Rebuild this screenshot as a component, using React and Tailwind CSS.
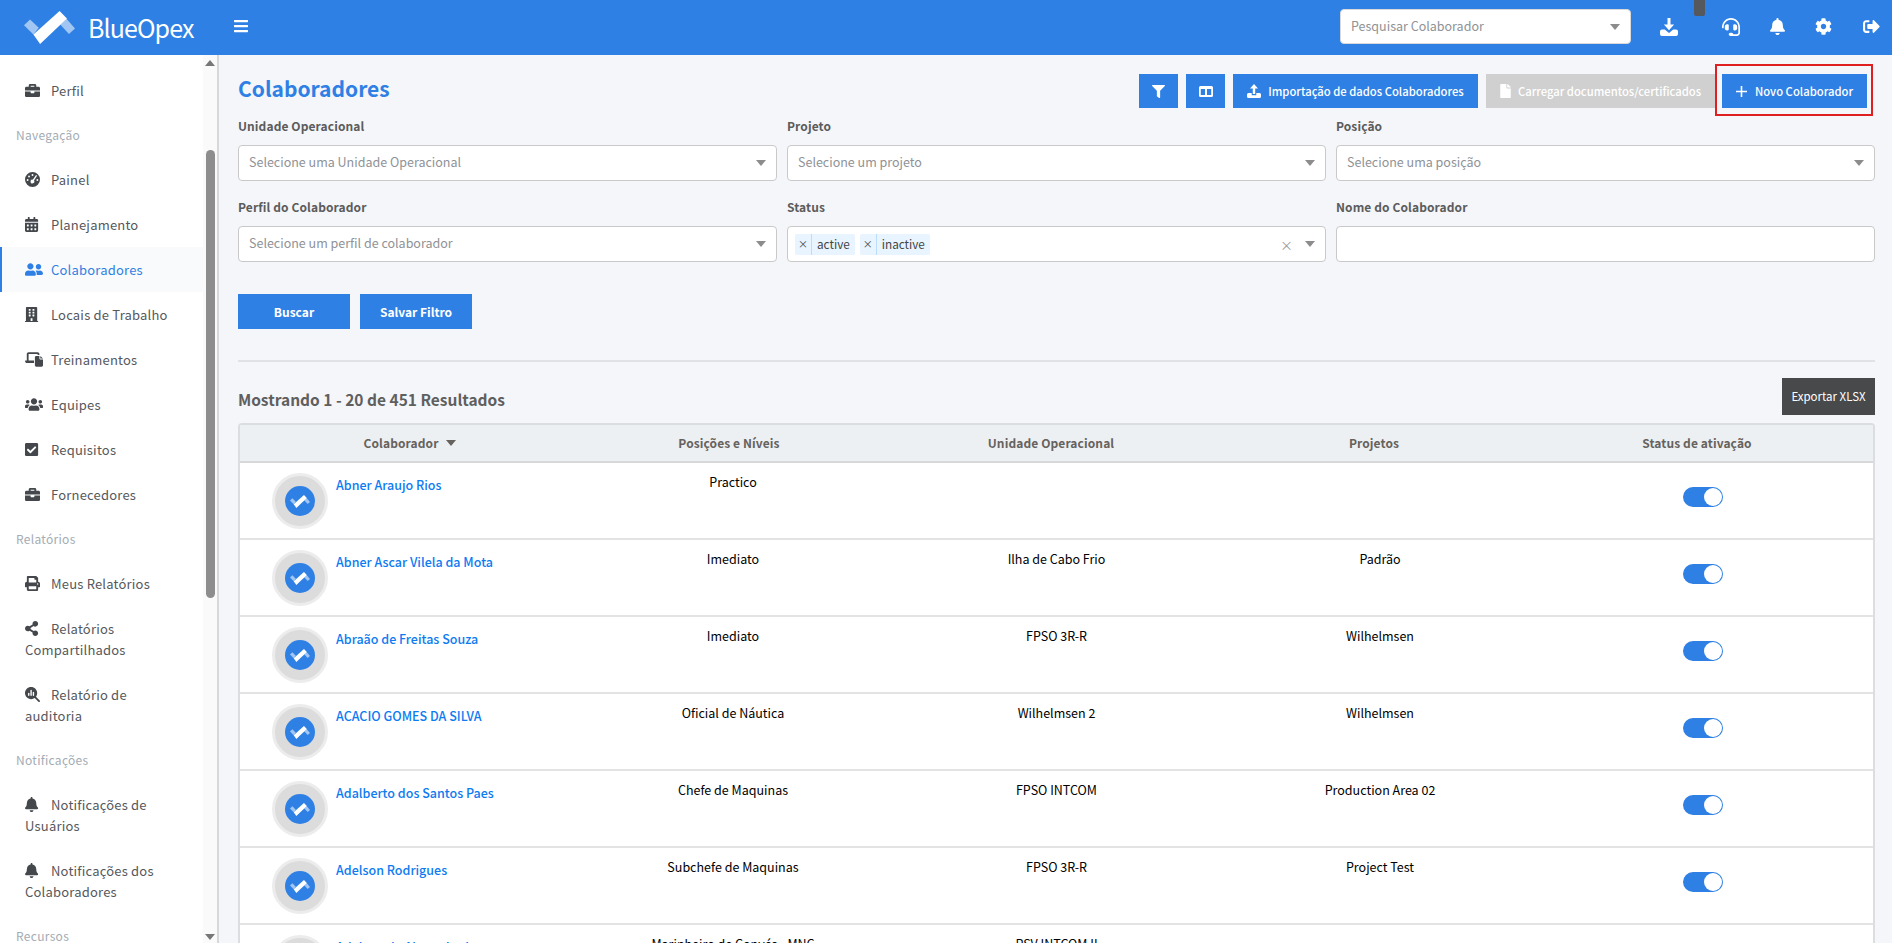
import { FaBriefcase, FaCalendarAlt, FaUserFriends, FaBuilding, FaUsers, FaCheckSquare, FaPrint, FaShareAlt, FaBell, FaHeadset, FaCog, FaSignOutAlt, FaFilter, FaFile, FaBars } from 'react-icons/fa'
import { FaLaptopFile, FaMagnifyingGlassChart } from 'react-icons/fa6'

const GaugeIcon = ({ className }) => (
  <svg viewBox="0 0 16 16" className={className} preserveAspectRatio="xMinYMid" fill="currentColor">
    <path fillRule="evenodd" d="M8 0a8 8 0 1 1 0 16A8 8 0 0 1 8 0Zm0 2.200a1 1 0 1 0 0 2 1 1 0 0 0 0-2ZM4.300 3.800a1 1 0 1 0 0 2 1 1 0 0 0 0-2ZM2.800 7.500a1 1 0 1 0 0 2 1 1 0 0 0 0-2Zm10.400 0a1 1 0 1 0 0 2 1 1 0 0 0 0-2ZM11.800 3.300 8.300 8.200a2 2 0 1 0 1.300.9l3.300-5.100Z" />
  </svg>
)

const mainItems = [
  { label: 'Painel', icon: GaugeIcon },
  { label: 'Planejamento', icon: FaCalendarAlt },
  { label: 'Colaboradores', icon: FaUserFriends, active: true },
  { label: 'Locais de Trabalho', icon: FaBuilding },
  { label: 'Treinamentos', icon: FaLaptopFile },
  { label: 'Equipes', icon: FaUsers },
  { label: 'Requisitos', icon: FaCheckSquare },
  { label: 'Fornecedores', icon: FaBriefcase }
]

const reportItems = [
  { label: 'Meus Relatórios', icon: FaPrint },
  { label: 'Relatórios Compartilhados', icon: FaShareAlt },
  { label: 'Relatório de auditoria', icon: FaMagnifyingGlassChart }
]

const noticeItems = [
  { label: 'Notificações de Usuários', icon: FaBell },
  { label: 'Notificações dos Colaboradores', icon: FaBell }
]

const rows = [
  { name: 'Abner Araujo Rios', position: 'Practico', unit: '', project: '' },
  { name: 'Abner Ascar Vilela da Mota', position: 'Imediato', unit: 'Ilha de Cabo Frio', project: 'Padrão' },
  { name: 'Abraão de Freitas Souza', position: 'Imediato', unit: 'FPSO 3R-R', project: 'Wilhelmsen' },
  { name: 'ACACIO GOMES DA SILVA', position: 'Oficial de Náutica', unit: 'Wilhelmsen 2', project: 'Wilhelmsen' },
  { name: 'Adalberto dos Santos Paes', position: 'Chefe de Maquinas', unit: 'FPSO INTCOM', project: 'Production Area 02' },
  { name: 'Adelson Rodrigues', position: 'Subchefe de Maquinas', unit: 'FPSO 3R-R', project: 'Project Test' },
  { name: 'Adelson de Abreu Junior', position: 'Marinheiro de Convés - MNC', unit: 'PSV INTCOM II', project: '' }
]

const Logo = ({ className }) => (
  <svg viewBox="0 0 152 98" className={className}>
    <path d="M0 42 L18 25 L44 50 L28 70 Z" fill="#fff" fillOpacity="0.55" />
    <path d="M126 22 L152 52 L134 68 L108 40 Z" fill="#fff" fillOpacity="0.55" />
    <path d="M28 70 L106 0 L128 22 L48 98 Z" fill="#fff" />
  </svg>
)

const Caret = ({ className }) => (
  <svg viewBox="0 0 10 6" className={`w-[10px] h-[6px] shrink-0 ${className}`} fill="currentColor"><path d="M0 0h10L5 6z" /></svg>
)

const SideItem = ({ label, icon: Icon, active }) => (
  <div className={`relative pl-[25px] pr-[40px] py-[12px] text-[13px] leading-[21px] tracking-[0.2px] ${active ? 'bg-[#f9fafb] text-[#2f80e4]' : 'text-[#55585c]'}`}>
    {active && <div className="absolute left-0 top-0 bottom-0 w-[2px] bg-[#2f80e4]" />}
    <Icon preserveAspectRatio="xMinYMid" className={`inline-block w-[18px] h-[15px] mr-[8px] align-[-2px] ${active ? 'text-[#2f80e4]' : 'text-[#44474b]'}`} />
    {label}
  </div>
)

const SideTitle = ({ children }) => (
  <div className="px-4 pt-[11px] pb-[12px] text-[12px] leading-[21px] tracking-[0.3px] text-[#a3acb4]">{children}</div>
)

const Field = ({ label, children }) => (
  <div className="flex flex-col">
    <label className="text-[12px] leading-[20px] font-semibold text-[#5c5c5c] tracking-[0.1px] mb-[9px]">{label}</label>
    {children}
  </div>
)

const SelectBox = ({ placeholder }) => (
  <div className="h-[36px] bg-white border border-[#c9c9c9] rounded-[4px] pl-[10px] pr-[10px] flex items-center justify-between">
    <span className="text-[12.5px] text-[#8f9296] mb-[2px]">{placeholder}</span>
    <Caret className="text-[#8c8c8c]" />
  </div>
)

const Avatar = () => (
  <div className="w-[56px] h-[56px] rounded-full bg-[#dcdcdc] border-[3px] border-[#ececec] flex items-center justify-center shrink-0">
    <div className="w-[30px] h-[30px] rounded-full bg-[#2f80e4] flex items-center justify-center">
      <Logo className="w-[20px] h-[13px]" />
    </div>
  </div>
)

const Toggle = () => (
  <div className="w-[40px] h-[20px] rounded-full bg-[#2f80e4] flex items-center justify-end pr-[1px]">
    <div className="w-[18px] h-[18px] rounded-full bg-white" />
  </div>
)

const Chip = ({ children }) => (
  <span className="h-[21px] rounded-[2px] bg-[#e8f4ff] flex items-center">
    <span className="w-[17px] h-full text-center leading-[19px] text-[10px] border-r border-[#bcdcfb]">×</span>
    <span className="px-[5px] text-[11.75px] text-[#444]">{children}</span>
  </span>
)

const Row = ({ row }) => (
  <div className="grid grid-cols-[342px_294px_350px_296px_350px] h-[77px] border-b-2 border-[#e3e3e3] text-[12.5px] text-black bg-white">
    <div className="flex items-start pl-[32px] pt-[10px] gap-[8px]">
      <Avatar />
      <a className="text-[#0d7bf2] font-medium pt-[1px] leading-[21px] text-[12.5px]">{row.name}</a>
    </div>
    <div className="text-center pt-[8px] pl-[8px] leading-[21px]">{row.position}</div>
    <div className="text-center pt-[8px] pl-[11px] leading-[21px]">{row.unit}</div>
    <div className="text-center pt-[8px] pl-[12px] leading-[21px]">{row.project}</div>
    <div className="flex justify-center pt-[24px] pl-[12px]"><Toggle /></div>
  </div>
)

export default function App() {
  return (
    <div className="h-[943px] overflow-hidden flex flex-col bg-[#f4f6fa]" style={{ fontFamily: '"Noto Sans CJK SC", "Noto Sans", sans-serif' }}>
      {/* Header */}
      <header className="relative h-[55px] shrink-0 bg-[#2f80e4] flex items-center text-white">
        <Logo className="ml-[24px] w-[51px] h-[33px]" />
        <span className="ml-[13px] text-[25px] leading-none tracking-[-0.9px]">BlueOpex</span>
        <FaBars className="ml-[39px] w-[16px] h-[16px] mb-[3px]" />
        <div className="ml-auto w-[291px] h-[35px] mb-[2px] bg-white rounded-[4px] border border-[#d9d9d9] flex items-center justify-between pl-[10px] pr-[10px]">
          <span className="text-[12.5px] text-[#8f9296]">Pesquisar Colaborador</span>
          <Caret className="text-[#8c8c8c]" />
        </div>
        <svg viewBox="0 0 18 18" fill="currentColor" className="ml-[29px] w-[18px] h-[18px] mb-[2px]">
          <path d="M7.5 0h3v6.5h3.6L9 12.2 3.9 6.5h3.6z" />
          <path d="M2 11.5h2.7L9 15l4.3-3.5H16a2 2 0 0 1 2 2V16a2 2 0 0 1-2 2H2a2 2 0 0 1-2-2v-2.5a2 2 0 0 1 2-2z" />
        </svg>
        <FaHeadset className="ml-[44px] w-[18px] h-[18px] mb-[2px]" />
        <FaBell className="ml-[29px] w-[17px] h-[17px] mb-[2px]" />
        <FaCog className="ml-[29px] w-[17px] h-[17px] mb-[2px]" />
        <FaSignOutAlt className="ml-[31px] mr-[12px] w-[17px] h-[17px] mb-[2px]" />
        <div className="absolute left-[1694px] top-0 w-[11px] h-[16px] bg-[#55595e] rounded-b-[2px]" />
      </header>

      <div className="flex-1 flex min-h-0">
        {/* Sidebar */}
        <aside className="relative w-[219px] shrink-0 bg-white border-r-2 border-[#d8d8d8] overflow-hidden pt-[13px]">
          <SideItem label="Perfil" icon={FaBriefcase} />
          <SideTitle>Navegação</SideTitle>
          {mainItems.map(item => <SideItem key={item.label} {...item} />)}
          <SideTitle>Relatórios</SideTitle>
          {reportItems.map(item => <SideItem key={item.label} {...item} />)}
          <SideTitle>Notificações</SideTitle>
          {noticeItems.map(item => <SideItem key={item.label} {...item} />)}
          <SideTitle>Recursos</SideTitle>
          {/* scrollbar */}
          <div className="absolute right-0 top-0 bottom-0 w-[14px] bg-[#fafafa]">
            <Caret className="absolute left-[2px] top-[5px] rotate-180 text-[#777]" />
            <div className="absolute left-[3px] top-[95px] w-[9px] h-[448px] rounded-full bg-[#8d8d8d]" />
            <Caret className="absolute left-[2px] bottom-[3px] text-[#777]" />
          </div>
        </aside>

        {/* Content */}
        <main className="flex-1 min-w-0 pl-[19px] pr-[17px] pt-[19px]">
          <div className="flex items-start justify-between h-[34px]">
            <h1 className="text-[21px] leading-[28px] font-semibold text-[#2f80e4]">Colaboradores</h1>
            <div className="relative flex items-center gap-[8px] pr-[8px] text-white text-[11.25px] font-medium whitespace-nowrap">
              <button className="w-[39px] h-[34px] bg-[#2f80e4] flex items-center justify-center"><FaFilter className="w-[13px] h-[13px]" /></button>
              <button className="w-[39px] h-[34px] bg-[#2f80e4] flex items-center justify-center">
                <svg viewBox="0 0 14 11" className="w-[14px] h-[11px]" fill="currentColor"><path fillRule="evenodd" d="M1.5 0h11A1.5 1.5 0 0 1 14 1.5v8a1.5 1.5 0 0 1-1.500 1.500h-11A1.500 1.500 0 0 1 0 9.500v-8A1.500 1.500 0 0 1 1.500 0Zm.3 3v6h4.200V3Zm6.200 0v6h4.200V3Z" /></svg>
              </button>
              <button className="w-[245px] h-[34px] bg-[#2f80e4] flex items-center justify-center gap-[7px]">
                <svg viewBox="0 0 14 14" className="w-[14px] h-[14px]" fill="currentColor">
                  <path d="M7 0l4 4.500H8.200V10H5.800V4.500H3z" />
                  <path d="M1.500 9H4.700v2.300h4.600V9h3.200A1.500 1.500 0 0 1 14 10.500v2a1.500 1.500 0 0 1-1.500 1.500h-11A1.500 1.500 0 0 1 0 12.500v-2A1.500 1.500 0 0 1 1.500 9z" />
                </svg>
                Importação de dados Colaboradores
              </button>
              <button className="w-[229px] h-[34px] bg-[#d0d0d0] flex items-center justify-center gap-[7px]"><FaFile className="w-[11px] h-[14px]" />Carregar documentos/certificados</button>
              <button className="w-[145px] h-[34px] bg-[#2f80e4] flex items-center justify-center gap-[8px] ml-[-1px]">
                <svg viewBox="0 0 11 11" className="w-[11px] h-[11px]" fill="currentColor"><path d="M4.700 0h1.600v4.700H11v1.600H6.300V11H4.700V6.300H0V4.700h4.700z" /></svg>
                Novo Colaborador
              </button>
              <div className="absolute right-[2px] top-[-10px] w-[158px] h-[52px] border-[2px] border-[#e02020]" />
            </div>
          </div>

          <div className="grid grid-cols-3 gap-x-[10px] gap-y-[16px] mt-[8px]">
            <Field label="Unidade Operacional"><SelectBox placeholder="Selecione uma Unidade Operacional" /></Field>
            <Field label="Projeto"><SelectBox placeholder="Selecione um projeto" /></Field>
            <Field label="Posição"><SelectBox placeholder="Selecione uma posição" /></Field>
            <Field label="Perfil do Colaborador"><SelectBox placeholder="Selecione um perfil de colaborador" /></Field>
            <Field label="Status">
              <div className="h-[36px] bg-white border border-[#c9c9c9] rounded-[4px] pl-[7px] pr-[10px] flex items-center gap-[5px] text-[#444]">
                <Chip>active</Chip>
                <Chip>inactive</Chip>
                <span className="ml-auto text-[#999] text-[13px] leading-none mr-[7px]">×</span>
                <Caret className="text-[#8c8c8c]" />
              </div>
            </Field>
            <Field label="Nome do Colaborador"><div className="h-[36px] bg-white border border-[#c9c9c9] rounded-[4px]" /></Field>
          </div>

          <div className="flex gap-[10px] mt-[32px]">
            <button className="w-[112px] h-[35px] bg-[#2f80e4] text-white text-[12px] font-semibold">Buscar</button>
            <button className="w-[112px] h-[35px] bg-[#2f80e4] text-white text-[12px] font-semibold">Salvar Filtro</button>
          </div>

          <hr className="mt-[31px] border-t-2 border-[#e0e2e6]" />

          <div className="flex items-end justify-between mt-[16px] mb-[8px]">
            <span className="text-[15.5px] font-semibold text-[#5f5f5f] leading-[27px] mb-[2px]">Mostrando 1 - 20 de 451 Resultados</span>
            <button className="w-[93px] h-[37px] bg-[#48494b] text-white text-[11.5px]">Exportar XLSX</button>
          </div>

          <div className="border-x-2 border-t-2 border-[#dcdde0] rounded-t-[4px]">
            <div className="grid grid-cols-[342px_294px_350px_296px_350px] h-[38px] items-center bg-[#edf0f2] border-b-2 border-[#d6d8da] text-[12px] tracking-[0.1px] font-semibold text-[#66625e] text-center">
              <div className="flex items-center justify-center gap-[7px] pr-[3px]">Colaborador <Caret /></div>
              <div>Posições e Níveis</div>
              <div>Unidade Operacional</div>
              <div>Projetos</div>
              <div>Status de ativação</div>
            </div>
            {rows.map(row => <Row key={row.name} row={row} />)}
          </div>
        </main>
      </div>
    </div>
  )
}
